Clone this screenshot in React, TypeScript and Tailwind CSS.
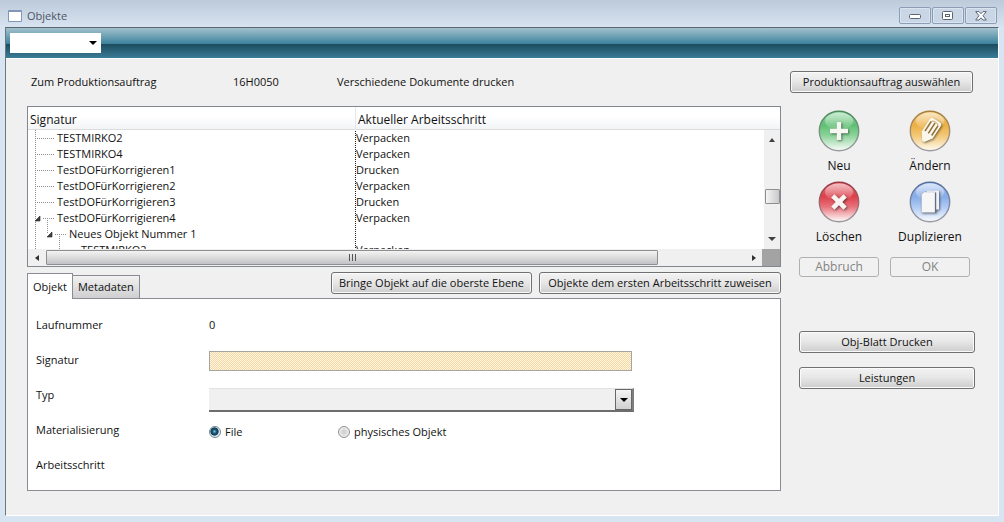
import { useId, useState } from 'react';
import type { ReactNode } from 'react';
import clsx from 'clsx';

type TreeRow = {
  name: string;
  step: string;
  depth: number;
  open?: boolean;
  last?: boolean;
};

const rows: TreeRow[] = [
  { name: 'TESTMIRKO2', step: 'Verpacken', depth: 0 },
  { name: 'TESTMIRKO4', step: 'Verpacken', depth: 0 },
  { name: 'TestDOFürKorrigieren1', step: 'Drucken', depth: 0 },
  { name: 'TestDOFürKorrigieren2', step: 'Verpacken', depth: 0 },
  { name: 'TestDOFürKorrigieren3', step: 'Drucken', depth: 0 },
  { name: 'TestDOFürKorrigieren4', step: 'Verpacken', depth: 0, open: true },
  { name: 'Neues Objekt Nummer 1', step: '', depth: 1, open: true, last: true },
  { name: 'TESTMIRKO2', step: 'Verpacken', depth: 2 },
];

function Arrow({ dir, className }: { dir: 'up' | 'down' | 'left' | 'right'; className?: string }) {
  const points = {
    up: '1,6 4,2 7,6',
    down: '0,2 8,2 4,6',
    left: '6,1 2,4 6,7',
    right: '2,1 6,4 2,7',
  };
  return (
    <svg viewBox="0 0 8 8" className={clsx('h-2 w-2 shrink-0', className)} fill="currentColor" aria-hidden="true">
      <polygon points={points[dir]} />
    </svg>
  );
}

function PushButton({ children, className, disabled }: { children: ReactNode; className?: string; disabled?: boolean }) {
  return (
    <button
      type="button"
      disabled={disabled}
      className={clsx(
        'flex items-center justify-center whitespace-nowrap rounded-[3px] border leading-4',
        disabled
          ? 'h-5 border-[#aeb1b4] bg-[#f1f1f1] text-[12px] text-[#838383]'
          : 'h-[22px] border-[#707070] bg-linear-to-b from-[#f3f3f3] via-[#e6e6e6] to-[#cdcdcd] shadow-[inset_0_0_0_1px_#fafafa]',
        className
      )}
    >
      {children}
    </button>
  );
}

function TreeLines({ depth, open, last }: TreeRow) {
  const x = 7 + depth * 12;
  return (
    <svg
      width={29 + depth * 12}
      height="16"
      className="shrink-0"
      fill="none"
      stroke="#8f8f8f"
      strokeDasharray="1 1"
      aria-hidden="true"
    >
      {depth > 0 && <path d="M7.5 0V16" />}
      <path d={last ? `M${x + 0.5} 0V8` : `M${x + 0.5} 0V16`} />
      <path d={`M${open ? x + 8 : x} 8.5H${x + 20}`} />
      {open && <path d={`M${x + 12.5} 8V16`} />}
      {open && (
        <polygon
          points={`${x},11 ${x + 5},11 ${x + 5},6`}
          fill="#404040"
          stroke="#222"
          strokeWidth="0.6"
          strokeDasharray="none"
        />
      )}
    </svg>
  );
}

function ObjectTree() {
  return (
    <div className="border border-[#828790] bg-white">
      <div className="flex h-[142px]">
        <div className="min-w-0 flex-1 overflow-hidden">
          <table className="w-full table-fixed border-separate border-spacing-0 text-left">
            <thead>
              <tr className="h-[23px] bg-linear-to-b from-white from-40% to-[#f1f3f5] text-[12px] leading-5 shadow-[inset_0_-1px_0_#d9dbdd]">
                <th className="w-[328px] border-r border-[#e3e8ea] p-0 pl-0.5 pt-0.5 font-normal">Signatur</th>
                <th className="p-0 pl-0.5 pt-0.5 font-normal">Aktueller Arbeitsschritt</th>
              </tr>
            </thead>
            <tbody>
              {rows.map((row, i) => (
                <tr key={i} className="h-4 leading-4">
                  <td className="bg-[linear-gradient(#222_50%,transparent_50%)] bg-size-[1px_2px] bg-right bg-repeat-y p-0">
                    <div className="flex h-4 whitespace-nowrap">
                      <TreeLines {...row} />
                      {row.name}
                    </div>
                  </td>
                  <td className="p-0">{row.step}</td>
                </tr>
              ))}
            </tbody>
          </table>
        </div>
        <div className="flex w-4 flex-col">
          <div className="h-[23px] bg-linear-to-b from-white from-40% to-[#f1f3f5] shadow-[inset_0_-1px_0_#d9dbdd]" />
          <div className="flex flex-1 flex-col items-center bg-[#f0f0f0] py-1.5 text-[#404040]">
            <Arrow dir="up" />
            <div className="mt-[45px] h-[15px] w-[15px] rounded-[1px] border border-[#8f8f8f] bg-linear-to-r from-[#f5f5f5] to-[#c9c9cb]" />
            <Arrow dir="down" className="mt-auto" />
          </div>
        </div>
      </div>
      <div className="flex h-[17px] bg-[#f0f0f0] text-[#303030]">
        <div className="flex w-[18px] items-center justify-center">
          <Arrow dir="left" />
        </div>
        <div className="flex flex-1 items-center justify-between">
          <div className="flex h-[15px] w-[85.5%] items-center justify-center gap-0.5 rounded-[1px] border border-[#8f8f8f] bg-linear-to-b from-[#f3f3f3] via-[#dcdcdd] to-[#c2c2c4]">
            <i className="h-[7px] w-px bg-[#555]" />
            <i className="h-[7px] w-px bg-[#555]" />
            <i className="h-[7px] w-px bg-[#555]" />
          </div>
          <Arrow dir="right" className="mr-1" />
        </div>
        <div className="w-[18px] bg-[#a3a3a3]" />
      </div>
    </div>
  );
}

type Tone = 'green' | 'amber' | 'red' | 'blue';

const tones: Record<Tone, [string, string, string, string]> = {
  green: ['#4d8a5c', '#5fbf74', '#8dd49b', '#edf7ee'],
  amber: ['#a98038', '#ecb044', '#f3c878', '#fdf5e2'],
  red: ['#9c3540', '#dc3f4a', '#e8727a', '#fbecec'],
  blue: ['#56709f', '#86abe6', '#aec9f4', '#f0f5fc'],
};

function ActionButton({ label, tone, children }: { label: string; tone: Tone; children: ReactNode }) {
  const id = useId();
  const [edge, main, soft, pale] = tones[tone];
  return (
    <button type="button" className="flex h-[71px] flex-col items-center text-[12px]">
      <svg width="42" height="42" viewBox="0 0 42 42" aria-hidden="true">
        <defs>
          <linearGradient id={`${id}body`} x1="0" y1="0" x2="0" y2="1">
            <stop offset="0" stopColor={soft} />
            <stop offset="0.35" stopColor={main} />
            <stop offset="0.62" stopColor={soft} />
            <stop offset="0.95" stopColor={pale} />
          </linearGradient>
          <linearGradient id={`${id}rim`} x1="0" y1="0" x2="0" y2="1">
            <stop offset="0" stopColor={edge} />
            <stop offset="1" stopColor="#9b9ba2" />
          </linearGradient>
          <linearGradient id={`${id}gloss`} x1="0" y1="0" x2="0" y2="1">
            <stop offset="0" stopColor="#fff" stopOpacity="0.55" />
            <stop offset="1" stopColor="#fff" stopOpacity="0.08" />
          </linearGradient>
        </defs>
        <circle cx="21" cy="21" r="19.7" fill={`url(#${id}body)`} stroke={`url(#${id}rim)`} strokeWidth="1.4" />
        <ellipse cx="21" cy="11" rx="14" ry="8.5" fill={`url(#${id}gloss)`} />
        <g className="drop-shadow-[1px_1px_1px_rgba(0,0,0,0.5)]">{children}</g>
      </svg>
      <span className="mt-1 leading-5">{label}</span>
    </button>
  );
}

function FormRow({ label, htmlFor, children }: { label: string; htmlFor?: string; children?: ReactNode }) {
  return (
    <div className="flex h-[35px] items-start pt-2 leading-[18px]">
      {htmlFor ? (
        <label htmlFor={htmlFor} className="w-[173px] shrink-0">
          {label}
        </label>
      ) : (
        <span className="w-[173px] shrink-0">{label}</span>
      )}
      {children}
    </div>
  );
}

const radioClass =
  'm-0 h-3 w-3 appearance-none rounded-full border border-[#8e8f8f] bg-[radial-gradient(circle,#d2d2d2_20%,#f4f4f4_75%)] checked:border-[#6d8797] checked:bg-[radial-gradient(circle_at_45%_45%,#7fc4e0_0%,#1b5877_25%,#123a52_48%,#dfeaf0_58%)]';

const captionButton =
  'flex h-[17px] w-8 items-center justify-center rounded-[2px] border border-[#8d9db6] bg-[#c9d6e5] shadow-[inset_0_0_0_1px_#dae4ef]';

export default function App() {
  const [tab, setTab] = useState('Objekt');
  const [material, setMaterial] = useState('File');

  return (
    <div className="flex min-h-screen flex-col bg-[#d7e4f1] px-[5px] pb-[7px] font-['Open_Sans','Noto_Sans',sans-serif] text-[11px] text-[#111]">
      <header className="-mx-[5px] flex h-[27px] items-center bg-linear-to-b from-[#bccada] to-[#d7e3f0] pl-2 pr-[7px] pt-1">
        <span className="h-3 w-[14px] rounded-[1px] border border-t-2 border-[#8296b8] bg-white" />
        <h1 className="ml-[5px] flex-1 leading-4 text-[#4b5663]">Objekte</h1>
        <div className="flex gap-px">
          <button type="button" aria-label="Minimieren" className={captionButton}>
            <svg width="12" height="6" fill="#fff" stroke="#5c6473" aria-hidden="true">
              <rect x="0.5" y="1.5" width="11" height="4" rx="1" />
            </svg>
          </button>
          <button type="button" aria-label="Maximieren" className={captionButton}>
            <svg width="12" height="10" fill="#fff" stroke="#5c6473" aria-hidden="true">
              <rect x="0.5" y="0.5" width="10" height="8" rx="1" />
              <rect x="3.5" y="3.5" width="4" height="2" />
            </svg>
          </button>
          <button type="button" aria-label="Schließen" className={captionButton}>
            <svg width="12" height="10" viewBox="0 0 12 10" fill="#fff" stroke="#5c6473" strokeLinejoin="round" aria-hidden="true">
              <path d="M0.7 0.6H4L6 2.7L8 0.6H11.3L8 4.7L11.3 9H8L6 6.8L4 9H0.7L4 4.7Z" />
            </svg>
          </button>
        </div>
      </header>

      <main className="flex flex-1 flex-col border border-t-[#59666e] border-r-white border-b-white border-l-[#6f767d] bg-[#f0f0f0]">
        <div className="flex h-[30px] items-center bg-[linear-gradient(#a3c1cd,#3d839d_52%,#1b4a5d_53%,#3b7c97)] pl-1">
          <div className="relative">
            <select aria-label="Auswahl" className="block h-5 w-[91px] appearance-none bg-white" />
            <Arrow dir="down" className="pointer-events-none absolute right-1 top-1.5 text-black" />
          </div>
        </div>

        <div className="flex-1 border-t border-white pb-6 pl-[21px] pr-[23px] pt-3">
          <div className="flex items-center">
            <span className="w-[202px] pl-1">Zum Produktionsauftrag</span>
            <span className="w-[104px] pl-1">16H0050</span>
            <span className="flex-1 pl-1">Verschiedene Dokumente drucken</span>
            <PushButton className="mr-0.5 w-[183px]">Produktionsauftrag auswählen</PushButton>
          </div>

          <div className="mt-[13px] flex gap-[18px]">
            <div className="min-w-0 flex-1">
              <ObjectTree />

              <div className="mt-[5px] flex items-start">
                <div role="tablist" className="flex h-[26px] items-end">
                  {['Objekt', 'Metadaten'].map((name) => (
                    <button
                      key={name}
                      type="button"
                      role="tab"
                      aria-selected={tab === name}
                      onClick={() => setTab(name)}
                      className={clsx(
                        'border border-b-0 border-[#898c95] px-[5px] leading-5',
                        tab === name
                          ? 'relative z-10 -mb-px h-[26px] bg-white'
                          : 'h-[23px] border-l-0 bg-linear-to-b from-[#f2f2f2] to-[#cfcfcf]'
                      )}
                    >
                      {name}
                    </button>
                  ))}
                </div>
                <div className="ml-auto flex gap-[7px]">
                  <PushButton className="w-[201px]">Bringe Objekt auf die oberste Ebene</PushButton>
                  <PushButton className="w-[242px]">Objekte dem ersten Arbeitsschritt zuweisen</PushButton>
                </div>
              </div>

              <form className="h-[193px] border border-[#898c95] bg-white pl-2 pt-[9px]">
                <FormRow label="Laufnummer">
                  <output>0</output>
                </FormRow>
                <FormRow label="Signatur" htmlFor="signatur">
                  <input
                    id="signatur"
                    className="h-5 w-[423px] border border-[#a5a5a0] bg-[conic-gradient(#f8d8a0_25%,#fff6e6_0_50%,#f8d8a0_0_75%,#fff6e6_0)] bg-size-[2px_2px] px-1"
                  />
                </FormRow>
                <FormRow label="Typ" htmlFor="typ">
                  <div className="relative pt-0.5">
                    <select
                      id="typ"
                      className="block h-6 w-[425px] appearance-none border-b-2 border-r-2 border-t border-b-[#6d6d6d] border-r-[#7d7d7d] border-t-[#e2e2e2] bg-[#f0f0f0]"
                    />
                    <span className="pointer-events-none absolute bottom-0.5 right-0.5 flex h-[21px] w-[17px] items-center justify-center border border-[#666] bg-linear-to-b from-[#f5f5f5] to-[#d0d0d0] text-black">
                      <Arrow dir="down" />
                    </span>
                  </div>
                </FormRow>
                <FormRow label="Materialisierung">
                  <div className="flex pt-0.5">
                    {['File', 'physisches Objekt'].map((name) => (
                      <label key={name} className="flex w-[129px] items-center gap-1 whitespace-nowrap">
                        <input
                          type="radio"
                          name="material"
                          checked={material === name}
                          onChange={() => setMaterial(name)}
                          className={radioClass}
                        />
                        {name}
                      </label>
                    ))}
                  </div>
                </FormRow>
                <FormRow label="Arbeitsschritt" />
              </form>
            </div>

            <aside className="w-[176px] shrink-0 pt-1">
              <div className="grid grid-cols-[80px_80px] justify-items-center gap-x-[11px]">
                <ActionButton label="Neu" tone="green">
                  <path d="M18.8 12H23.2V18.8H30V23.2H23.2V30H18.8V23.2H12V18.8H18.8Z" fill="#f6f6f2" />
                </ActionButton>
                <ActionButton label="Ändern" tone="amber">
                  <g transform="translate(21.5 20) rotate(33)">
                    <path
                      d="M-6.5 -8.5Q-6.5 -11.5 -3.5 -11.5H3.5Q6.5 -11.5 6.5 -8.5V6L1.2 13.5H-1.2L-6.5 6Z"
                      fill="#fbf7ea"
                    />
                    <path d="M-4 -7.5V4M0 -8.5V4M4 -7.5V4" stroke="#94733a" strokeWidth="1.6" fill="none" />
                    <path d="M-4 -7.5Q-3.5 -9.5 0 -9.3Q3.5 -9.5 4 -7.5" stroke="#b08c4c" strokeWidth="0.7" fill="none" />
                  </g>
                </ActionButton>
                <ActionButton label="Löschen" tone="red">
                  <path
                    d="M16.5 13.2L21 17.7L25.5 13.2L28.8 16.5L24.3 21L28.8 25.5L25.5 28.8L21 24.3L16.5 28.8L13.2 25.5L17.7 21L13.2 16.5Z"
                    fill="#f8f4f2"
                  />
                </ActionButton>
                <ActionButton label="Duplizieren" tone="blue">
                  <path d="M18 9.5H30V28.5H18Z" fill="#f1f2f3" />
                  <path d="M26.6 11.5V31.5" stroke="#55617a" strokeWidth="1.2" />
                  <path d="M15 11H26V31.5H12.5V13.5Z" fill="#f6f6f6" stroke="#98a4ba" strokeWidth="0.4" />
                </ActionButton>
              </div>
              <div className="mt-[5px] flex gap-[11px]">
                <PushButton disabled className="w-20">
                  Abbruch
                </PushButton>
                <PushButton disabled className="w-20">
                  OK
                </PushButton>
              </div>
              <div className="mt-[54px] flex flex-col gap-[14px]">
                <PushButton>Obj-Blatt Drucken</PushButton>
                <PushButton>Leistungen</PushButton>
              </div>
            </aside>
          </div>
        </div>
      </main>
    </div>
  );
}
